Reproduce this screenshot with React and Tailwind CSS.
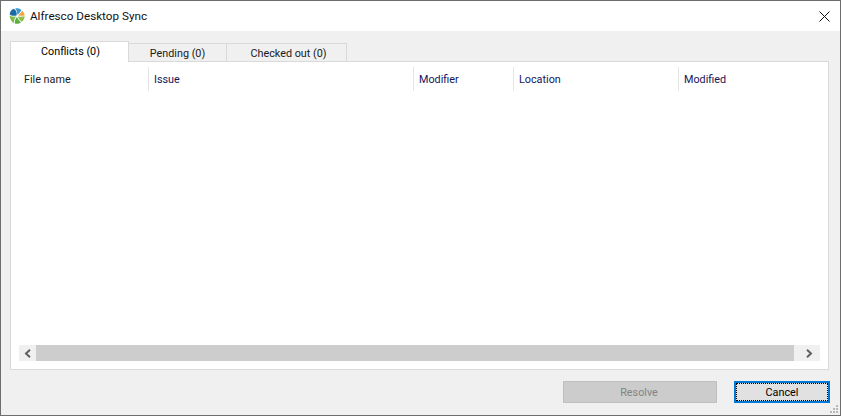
import React from 'react';

const font = "font-['Roboto','Noto_Sans',sans-serif]";

const columns = [
  { label: 'File name', width: 'w-[130px]' },
  { label: 'Issue', width: 'w-[265px]' },
  { label: 'Modifier', width: 'w-[100px]' },
  { label: 'Location', width: 'w-[165px]' },
  { label: 'Modified', width: 'flex-1' },
];

const Logo = () => (
  <svg width="16" height="16" viewBox="0 0 16 16">
    <path d="M7.6 7.4 C5 8.2 2 7.8 0.6 6.2 C0.8 3.6 2.6 1.4 5 0.7 C7 2 8.2 4.6 7.6 7.4Z" fill="#1b6aa5" />
    <path d="M8.2 6.8 C8.4 4.4 7.6 2 6.2 0.4 C8.8 -0.1 11 0.6 12.4 2 C11.4 4 10 5.8 8.2 6.8Z" fill="#3f9ad0" />
    <path d="M9 7.4 C10.6 6 12 4.4 13.2 2.8 C14.6 4 15.4 5.6 15.6 7.4 C13.6 8 11.2 8 9 7.4Z" fill="#f2a93b" />
    <path d="M8.8 8.4 C11 8.8 13.6 8.8 15.6 8.2 C15.6 10.6 14.4 12.6 12.8 13.8 C11 12.6 9.6 10.6 8.8 8.4Z" fill="#8cc04a" />
    <path d="M8 9 C9 11 10.4 13 12 14.4 C10.2 15.7 7.8 16 5.8 15.4 C5.6 13 6.4 10.6 8 9Z" fill="#5fae3f" />
    <path d="M7.2 8.6 C5.6 10.2 4.8 12.6 5 14.9 C2.8 14 1.2 11.8 0.6 7.4 C2.6 8.6 5 9 7.2 8.6Z" fill="#7dbb46" />
  </svg>
);

const Tab = ({ label, active, width, extra = '' }) =>
  active ? (
    <div className={`${width} ${extra} relative z-10 h-[21px] -mb-px bg-white border border-b-0 border-[#d9d9d9] flex justify-center pt-[2px] text-black`}>
      {label}
    </div>
  ) : (
    <div className={`${width} ${extra} h-[18px] -ml-px bg-[#f0f0f0] border border-b-0 border-[#d9d9d9] flex justify-center items-center pt-[2px]`}>
      {label}
    </div>
  );

const Arrow = ({ dir }) => (
  <svg width="8" height="9" viewBox="0 0 8 9" className={dir === 'right' ? 'rotate-180' : ''}>
    <path d="M6 0.8 L2 4.5 L6 8.2" fill="none" stroke="#606060" strokeWidth="2" />
  </svg>
);

export default function App() {
  return (
    <div className={`${font} w-[841px] h-[416px] flex flex-col bg-[#f0f0f0] border border-[#6d6d6d] text-[10.8px] leading-4 text-[#1a1a1a] overflow-hidden relative`}>
      <div className="h-[30px] shrink-0 bg-white flex items-center pl-2 pr-[10px]">
        <Logo />
        <span className="ml-[5px] text-[11.7px] text-[#111]">Alfresco Desktop Sync</span>
        <svg width="11" height="11" viewBox="0 0 11 11" className="ml-auto">
          <path d="M0.5 0.5 L10.5 10.5 M10.5 0.5 L0.5 10.5" stroke="#111" strokeWidth="1" />
        </svg>
      </div>

      <div className="flex-1 flex flex-col pt-2.5 pl-[9px] pr-[11px]">
        <div className="flex items-end h-[20px]">
          <Tab label="Conflicts (0)" active width="w-[119px]" extra="pl-[2px]" />
          <Tab label="Pending (0)" width="w-[99px]" />
          <Tab label="Checked out (0)" width="w-[121px]" extra="pl-[4px]" />
        </div>
        <div className="h-[309px] bg-white border border-[#d9d9d9] flex flex-col pt-[5px] pl-[8px] pr-2">
          <div className="flex h-[24px]">
            {columns.map((col, i) => (
              <div key={col.label} className={`${col.width} flex items-center pl-[5px] pt-px ${i < 4 ? 'border-r border-[#e5e5e5]' : ''} ${i > 0 ? 'text-[#14145a]' : ''}`}>
                {col.label}
              </div>
            ))}
          </div>
          <div className="flex-1" />
          <div className="h-[16px] mb-[8px] flex bg-[#f0f0f0]">
            <div className="w-[17px] flex items-center justify-center"><Arrow dir="left" /></div>
            <div className="flex-1 bg-[#cdcdcd]" />
            <div className="w-[26px] flex items-center justify-center pl-[3px]"><Arrow dir="right" /></div>
          </div>
        </div>

        <div className="flex justify-end items-start pt-[11px] -mr-px">
          <div className="w-[154px] h-[22px] bg-[#cccccc] border border-[#bfbfbf] flex items-center justify-center pt-px pr-[2px] text-[#838383]">
            Resolve
          </div>
          <div className="ml-[17px] w-[96px] h-[22px] bg-[#e1e1e1] border-2 border-[#0078d7] flex items-center justify-center text-black">
            <div className="w-full h-full border border-dotted border-black flex items-center justify-center pt-px">Cancel</div>
          </div>
        </div>
      </div>

      <svg width="9" height="9" viewBox="0 0 9 9" className="absolute right-px bottom-px">
        <path d="M6 0h2v2H6zM3 3h2v2H3zM6 3h2v2H6zM0 6h2v2H0zM3 6h2v2H3zM6 6h2v2H6z" fill="#b8b8b8" />
      </svg>
    </div>
  );
}
